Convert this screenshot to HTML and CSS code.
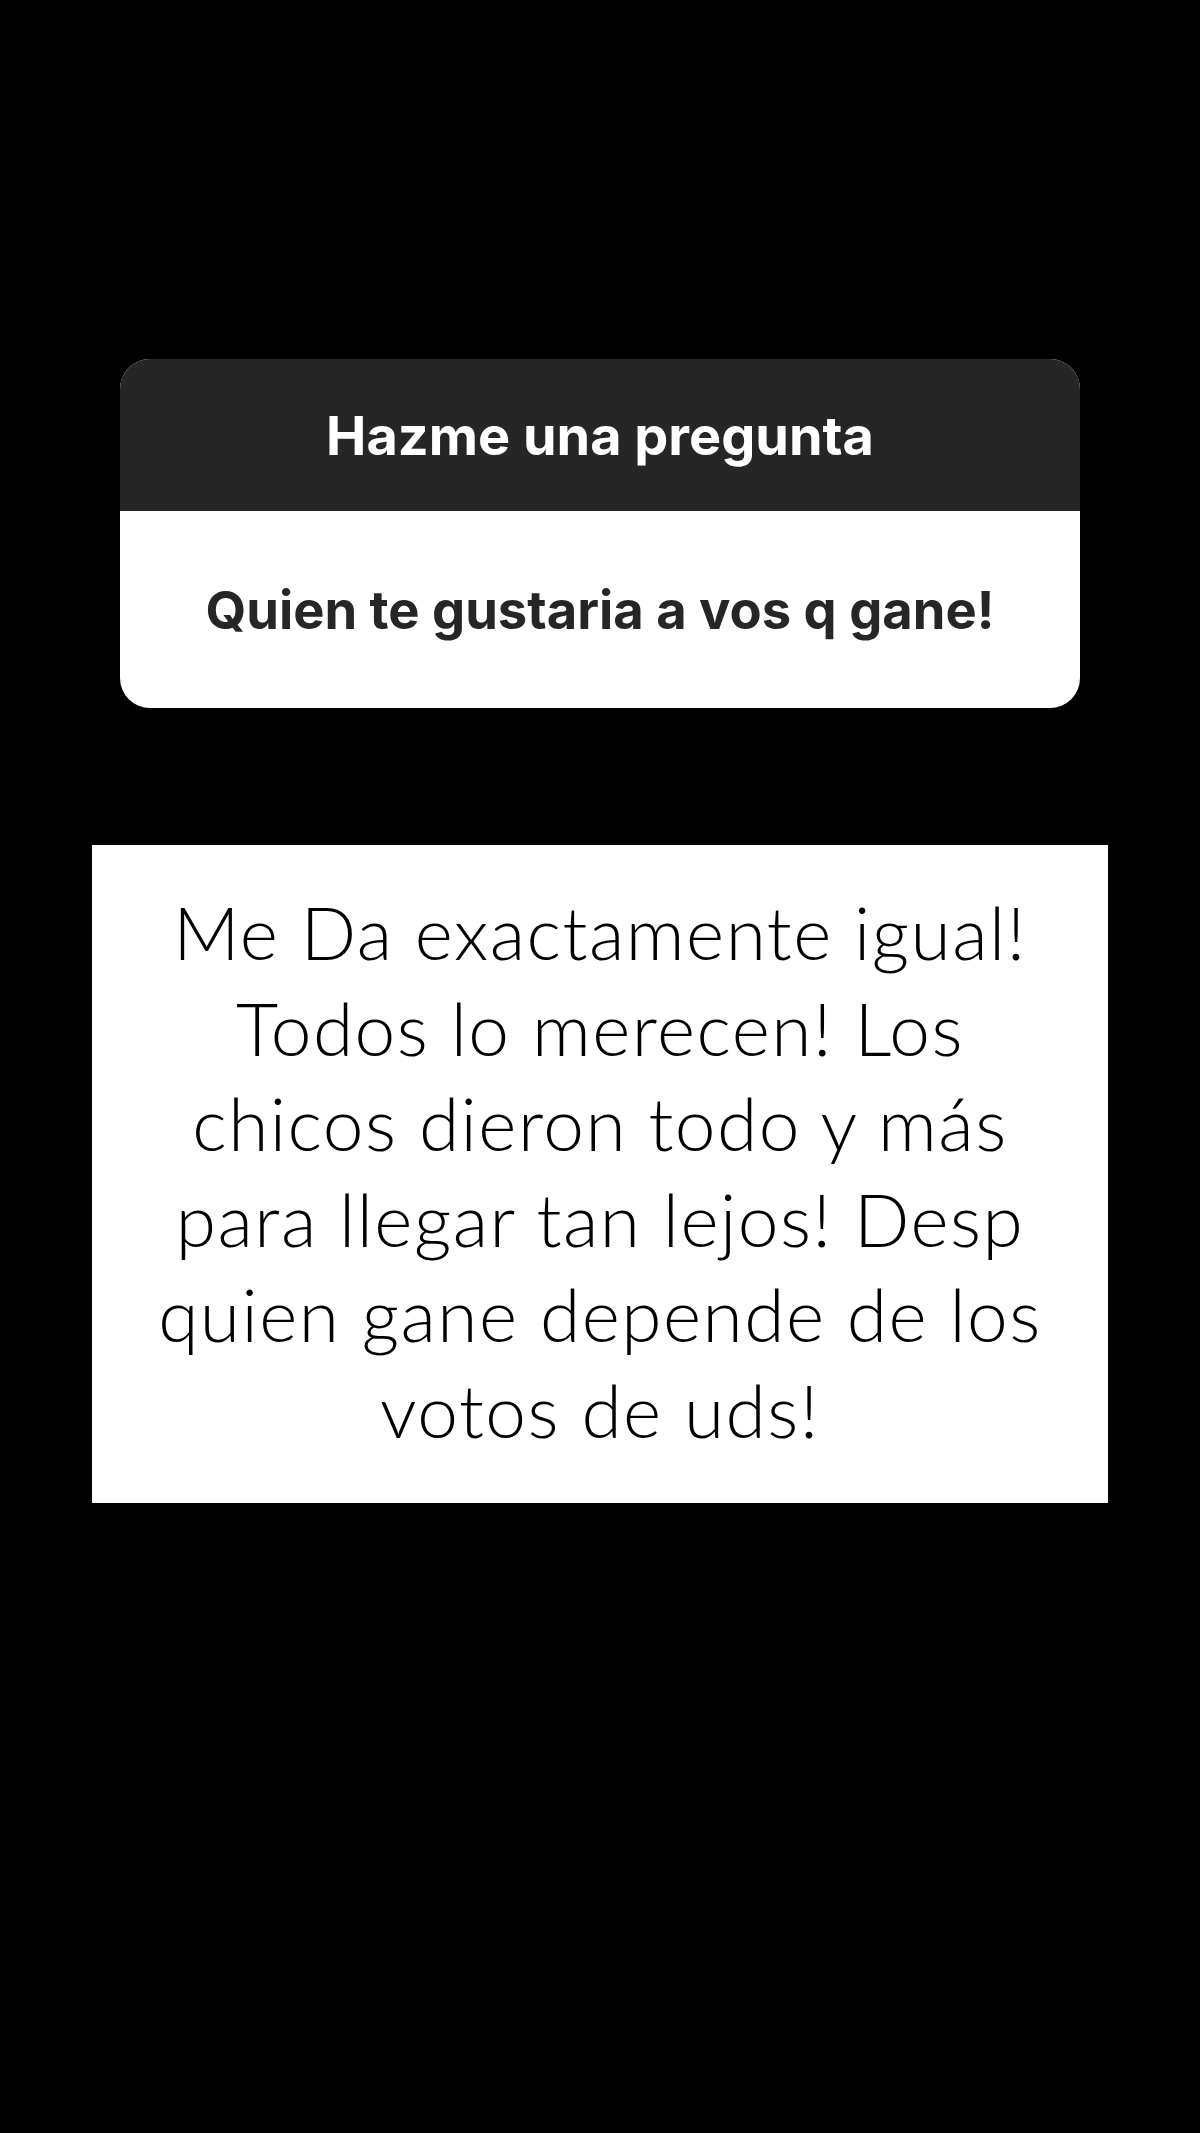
FILE: index.html
```html
<!DOCTYPE html>
<html lang="es">
<head>
<meta charset="utf-8">
<title>Hazme una pregunta</title>
<link rel="stylesheet" href="styles.css">
</head>
<body>
<main class="story">
  <section class="question-card">
    <div class="question-head">Hazme una pregunta</div>
    <div class="question-body">Quien te gustaria a vos q gane!</div>
  </section>
  <section class="answer">
    <p class="answer-text">Me Da exactamente igual!<br>Todos lo merecen! Los<br>chicos dieron todo y más<br>para llegar tan lejos! Desp<br>quien gane depende de los<br>votos de uds!</p>
  </section>
</main>
</body>
</html>
```
FILE: styles.css
```css
html, body {
  margin: 0;
  padding: 0;
  background: #000;
}
.story {
  width: 1200px;
  height: 2133px;
  display: flex;
  flex-direction: column;
  align-items: center;
  padding-top: 359px;
  box-sizing: border-box;
}
.question-card {
  width: 960px;
  border-radius: 30px;
  overflow: hidden;
  background: #fff;
}
.question-head {
  height: 152px;
  background: #262626;
  color: #fff;
  font-family: Inter, "Liberation Sans", sans-serif;
  font-weight: 700;
  font-size: 54px;
  letter-spacing: 0;
  display: flex;
  align-items: center;
  justify-content: center;
}
.question-body {
  height: 197px;
  color: #262626;
  font-family: Inter, "Liberation Sans", sans-serif;
  font-weight: 700;
  font-size: 52.5px;
  letter-spacing: 0;
  display: flex;
  align-items: center;
  justify-content: center;
}
.answer {
  margin-top: 137px;
  width: 1016px;
  height: 658px;
  background: #fff;
  box-sizing: border-box;
  padding-top: 40px;
}
.answer-text {
  margin: 0;
  text-align: center;
  color: #000;
  font-family: Lato, "Open Sans", sans-serif;
  font-weight: 300;
  font-size: 73px;
  letter-spacing: 1.5px;
  line-height: 95.5px;
}
```
